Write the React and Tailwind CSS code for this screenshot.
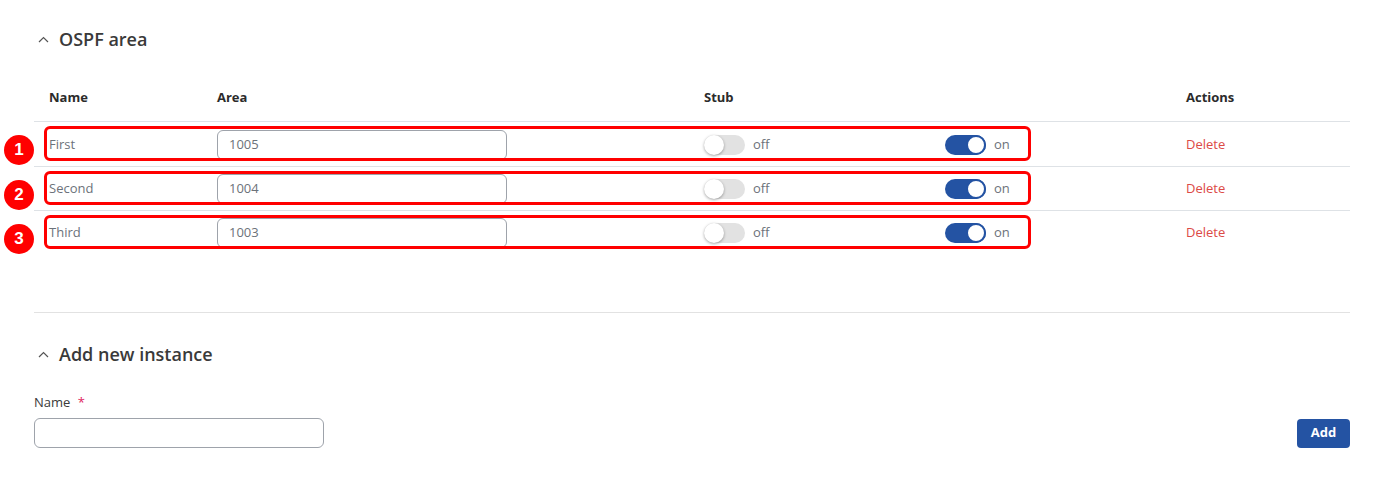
import React from "react";

const rows = [
  { n: 1, name: "First", area: "1005" },
  { n: 2, name: "Second", area: "1004" },
  { n: 3, name: "Third", area: "1003" },
];

function Chevron() {
  return (
    <svg width="11" height="7" viewBox="0 0 11 7" className="mr-[10px]">
      <path d="M1 6 L5.5 1.5 L10 6" fill="none" stroke="#555" strokeWidth="1.2" />
    </svg>
  );
}

function Toggle({ on }) {
  return (
    <div className="flex items-center">
      <div
        className={
          on
            ? "relative w-[41px] h-[20px] rounded-full bg-[#2453a3]"
            : "relative w-[41px] h-[20px] rounded-full bg-[#e2e2e2]"
        }
      >
        <div
          className={
            on
              ? "absolute right-0 top-0 w-[20px] h-[20px] rounded-full bg-white border-2 border-[#2453a3]"
              : "absolute left-0 top-0 w-[20px] h-[20px] rounded-full bg-white shadow-[0_1px_3px_rgba(0,0,0,0.35)]"
          }
        />
      </div>
      <span className="ml-[8px] text-[13px] text-[#6c727a]">{on ? "on" : "off"}</span>
    </div>
  );
}

export default function App() {
  return (
    <div
      className="w-[1377px] h-[502px] bg-white pl-[34px] pr-[27px] pt-[27px]"
      style={{ fontFamily: '"Open Sans", sans-serif' }}
    >
      <div className="flex items-center h-[24px] pl-[4px]">
        <Chevron />
        <span className="text-[18px] leading-[24px] font-semibold text-[#3a3a3a]">OSPF area</span>
      </div>

      <div className="mt-[22px]">
        <div className="flex h-[49px] pt-[2px] items-center border-b border-[#dee2e6] text-[13px] font-bold text-[#2b2b2b]">
          <div className="w-[168px] pl-[15px]">Name</div>
          <div className="w-[487px] pl-[15px]">Area</div>
          <div className="w-[241px] pl-[15px]">Stub</div>
          <div className="w-[241px] pl-[15px]"></div>
          <div className="flex-1 pl-[15px]">Actions</div>
        </div>
        {rows.map((r, i) => (
          <div
            key={r.n}
            className={
              i === 0
                ? "relative flex h-[44px] items-center text-[13px] pt-[1px]"
                : "relative flex h-[44px] items-center text-[13px] border-t border-[#dee2e6]"
            }
          >
            <div className="w-[168px] pl-[15px] text-[#6c727a]">{r.name}</div>
            <div className="w-[487px] pl-[15px]">
              <div className="w-[290px] h-[30px] rounded-[6px] border border-[#9ea3ab] pl-[11px] flex items-center text-[13px] text-[#6c727a]">
                {r.area}
              </div>
            </div>
            <div className="w-[241px] pl-[15px]">
              <Toggle on={false} />
            </div>
            <div className="w-[241px] pl-[15px]">
              <Toggle on={true} />
            </div>
            <div className="flex-1 pl-[15px] text-[#dc4a46]">Delete</div>

            <div className="absolute left-[10px] w-[987px] top-[4px] bottom-[5px] border-[3px] border-[#ff0000] rounded-[6px] pointer-events-none" />
            <div
              className="absolute left-[-30px] top-[13px] w-[30px] h-[30px] rounded-full bg-[#ff0000] text-white flex items-center justify-center text-[17px] font-bold"
              style={{ fontFamily: '"Liberation Sans", sans-serif' }}
            >
              {r.n}
            </div>
          </div>
        ))}
      </div>

      <div className="mt-[58px] border-t border-[#e2e2e2]" />

      <div className="mt-[29px] flex items-center h-[24px] pl-[4px]">
        <Chevron />
        <span className="text-[18px] leading-[24px] font-semibold text-[#3a3a3a]">Add new instance</span>
      </div>

      <div className="mt-[26px] text-[13px] leading-[20px] text-[#3a3a3a]">
        Name <span className="ml-[4px] text-[#e0245e]">*</span>
      </div>
      <div className="mt-[6px] flex items-center justify-between">
        <div className="w-[290px] h-[30px] rounded-[6px] border border-[#9ea3ab]" />
        <button className="w-[53px] h-[29px] rounded-[4px] bg-[#2453a3] text-white text-[13px] font-bold">
          Add
        </button>
      </div>
    </div>
  );
}
